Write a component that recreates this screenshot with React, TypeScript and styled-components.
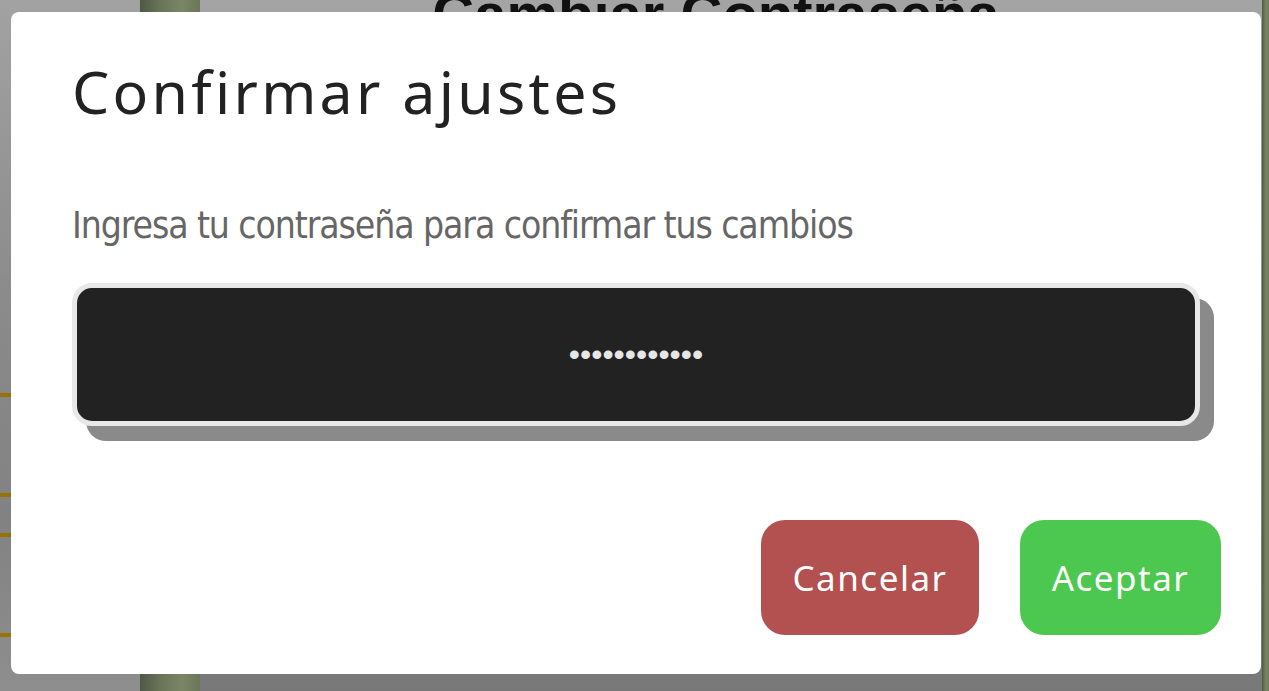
import * as React from 'react'
import styled, { createGlobalStyle } from 'styled-components'

const GlobalStyle = createGlobalStyle`
    html, body {
        margin: 0;
        padding: 0;
        height: 100%;
        overflow: hidden;
    }
    body {
        font-family: "Noto Sans", "DejaVu Sans", sans-serif;
    }
`

const StyledPage = styled.div`
    display: flex;
    height: 100vh;
    overflow: hidden;
`

const StyledRail = styled.div`
    width: 140px;
    display: flex;
    flex-direction: column;
    background: linear-gradient(180deg, #a2a2a2 0%, #8a8a8a 45%, #828282 75%, #8e8e8e 100%);
`

const StyledRailRow = styled.div<{ $height: number }>`
    height: ${p => p.$height}px;
    flex: none;
    border-bottom: 4px solid #977400;
`

const StyledPillar = styled.div<{ $width: string }>`
    width: ${p => p.$width};
    flex: none;
    background: linear-gradient(90deg, #4f5846 0%, #6a7558 35%, #7a8665 70%, #6b7659 100%);
`

const StyledMain = styled.main`
    flex: 1;
    display: flex;
    justify-content: center;
    padding-right: 30px;
    background: linear-gradient(180deg, #a4a4a4 0%, #8e8e8e 60%, #787878 100%);
`

const StyledPageTitle = styled.h1`
    margin: -15px 0 0;
    font-family: "Liberation Sans", Arial, sans-serif;
    font-weight: 700;
    font-size: 58px;
    line-height: 58px;
    color: #111;
    white-space: nowrap;
`

const StyledBackdrop = styled.div`
    position: fixed;
    inset: 0;
    padding: 12px 8px 0 11px;
    display: flex;
    align-items: flex-start;
`

const StyledModal = styled.div`
    flex: 1;
    background: #fff;
    border-radius: 8px;
    padding: 44px 61px 39px;
    display: flex;
    flex-direction: column;
`

const StyledTitle = styled.h2`
    margin: 0;
    font-family: "Noto Sans", sans-serif;
    font-weight: 400;
    font-size: 59px;
    line-height: 70px;
    letter-spacing: 3.3px;
    color: #222;
`

const StyledSubtitle = styled.p`
    margin: 76px 0 0;
    font-family: "Liberation Sans Narrow", "DejaVu Sans Condensed", sans-serif;
    font-stretch: condensed;
    font-size: 37px;
    line-height: 48px;
    letter-spacing: -1.1px;
    color: #666;
`

const StyledInput = styled.input`
    margin-top: 33px;
    box-sizing: border-box;
    width: 100%;
    height: 143px;
    border: 5px solid #e8e8e8;
    border-radius: 20px;
    background: #222;
    color: #e6e6e6;
    box-shadow: 14px 15px 0 #8a8a8a;
    text-align: center;
    font-family: "Liberation Sans", Arial, sans-serif;
    font-size: 32px;
    outline: none;
`

const StyledActions = styled.div`
    margin: 94px -21px 0 0;
    display: flex;
    justify-content: flex-end;
    gap: 41px;
`

const StyledButton = styled.button<{ $color: string; $width: number }>`
    width: ${p => p.$width}px;
    height: 115px;
    border: none;
    border-radius: 24px;
    background: ${p => p.$color};
    color: #fff;
    font-family: "Noto Sans", sans-serif;
    font-size: 35px;
    letter-spacing: 1.5px;
    cursor: pointer;
`

const railRows = [393, 96, 36, 96]

const App = () => {
    const [password, setPassword] = React.useState<string>('contraseña12')

    return (
        <>
            <GlobalStyle />
            <StyledPage>
                <StyledRail>
                    {railRows.map((h, i) => (
                        <StyledRailRow key={i} $height={h} />
                    ))}
                </StyledRail>
                <StyledPillar $width="60px" />
                <StyledMain>
                    <StyledPageTitle>Cambiar Contraseña</StyledPageTitle>
                </StyledMain>
                <StyledPillar $width="7px" />
            </StyledPage>
            <StyledBackdrop>
                <StyledModal>
                    <StyledTitle>Confirmar ajustes</StyledTitle>
                    <StyledSubtitle>Ingresa tu contraseña para confirmar tus cambios</StyledSubtitle>
                    <StyledInput
                        type="password"
                        value={password}
                        onChange={e => setPassword(e.currentTarget.value)}
                    />
                    <StyledActions>
                        <StyledButton $color="#b35050" $width={218}>
                            Cancelar
                        </StyledButton>
                        <StyledButton $color="#4cc750" $width={201}>
                            Aceptar
                        </StyledButton>
                    </StyledActions>
                </StyledModal>
            </StyledBackdrop>
        </>
    )
}

export default App
